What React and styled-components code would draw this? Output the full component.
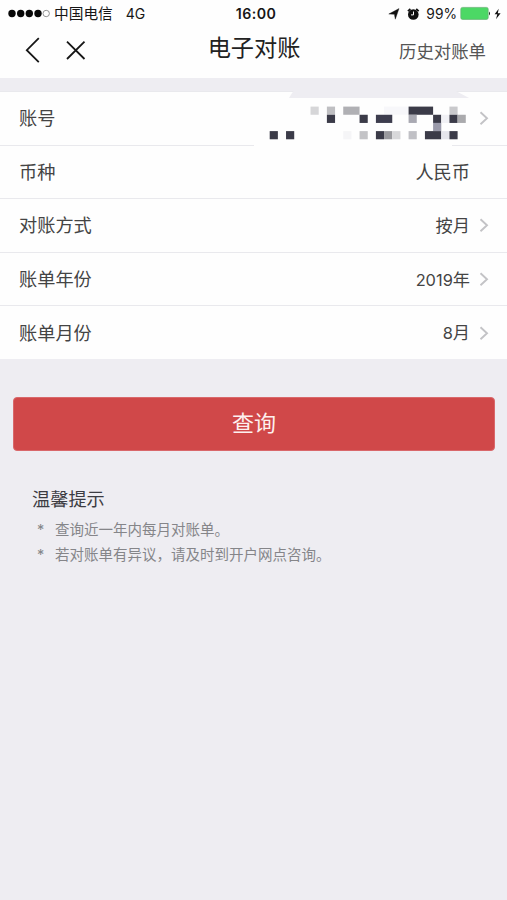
import React from "react";
import styled, { createGlobalStyle } from "styled-components";

const GlobalStyle = createGlobalStyle`
  * { box-sizing: border-box; }
  body {
    margin: 0;
    background: #eeedf2;
    font-family: "Liberation Sans", "Noto Sans CJK SC", sans-serif;
  }
`;

const Screen = styled.div`
  width: 507px;
  height: 900px;
  overflow: hidden;
  background: #eeedf2;
`;

const StatusBar = styled.div`
  display: grid;
  grid-template-columns: 1fr auto 1fr;
  align-items: center;
  height: 27px;
  padding: 0 5px 0 8px;
  background: #fefefe;
  color: #161616;
  font-size: 14.7px;
  line-height: 26px;
`;

const StatusGroup = styled.div`
  display: flex;
  align-items: center;
  justify-content: ${(p) => (p.$end ? "flex-end" : "flex-start")};
  height: 26px;
`;

const Carrier = styled.span`
  margin-left: 4px;
  white-space: nowrap;
`;

const Network = styled.span`
  margin-left: 13px;
  font-family: Inter, sans-serif;
  font-size: 14px;
`;

const Clock = styled.div`
  padding-left: 2px;
  font-family: Inter, "Liberation Sans", sans-serif;
  font-size: 14.2px;
  font-weight: 600;
  letter-spacing: 0.45px;
`;

const Percent = styled.span`
  margin: 0 3px 0 5px;
  font-family: Inter, sans-serif;
  font-size: 13.8px;
`;

const NavBar = styled.header`
  display: grid;
  grid-template-columns: 1fr auto 1fr;
  align-items: center;
  height: 51px;
  padding: 0 21px 0 24px;
  background: #fefefe;
`;

const NavIcons = styled.div`
  display: flex;
  align-items: center;
  gap: 25px;
  height: 46px;
  padding-bottom: 5px;
`;

const Title = styled.h1`
  margin: 0 2px 9px 0;
  color: #222;
  font-size: 23.2px;
  font-weight: 400;
  line-height: 34px;
`;

const HistoryLink = styled.div`
  justify-self: end;
  margin-bottom: 2px;
  color: #555;
  font-size: 17.4px;
  line-height: 26px;
`;

const List = styled.section`
  margin-top: 13px;
  background: #fefefe;
`;

const Row = styled.div`
  position: relative;
  display: flex;
  align-items: center;
  height: 53.6px;
  padding: 0 18px 0 19px;
  border-top: 1.5px solid #e9e9ed;
  color: #444;
  font-size: 18.2px;
  line-height: 28px;
`;

const Label = styled.span`
  flex: 1;
  padding-top: 2px;
`;

const Value = styled.span`
  margin-right: ${(p) => (p.$plain ? "19px" : "9px")};
  padding-top: 1px;
  font-family: Inter, "Noto Sans CJK SC", sans-serif;
  font-size: ${(p) => (p.$plain ? "18.2px" : "17.2px")};
`;

const Digits = styled.span`
  font-size: 16.4px;
`;

const Mosaic = styled.svg`
  position: absolute;
  left: 250px;
  top: -2px;
  z-index: 1;
`;

const QueryButton = styled.button`
  display: block;
  width: 482px;
  height: 54px;
  margin: 38px 0 0 13px;
  padding: 0;
  border: 1px solid #d9686b;
  border-radius: 4px;
  background: #d04849;
  color: #fdf0ef;
  font: inherit;
  font-size: 22px;
  line-height: 50px;
`;

const Tips = styled.section`
  padding: 35.5px 32px 0;
  color: #858589;
`;

const TipsTitle = styled.h2`
  margin: 0 0 3px;
  color: #3c3c42;
  font-size: 18.2px;
  font-weight: 400;
  line-height: 29px;
`;

const Tip = styled.div`
  display: flex;
  height: 24.5px;
  padding-left: 5px;
  font-size: 14.5px;
  line-height: 24px;
  white-space: nowrap;
`;

const Star = styled.span`
  width: 18px;
  font-family: Inter, sans-serif;
`;

const D = "#3b3b48";
const CELL = 8.17;
/* [column, row, span, colour] */
const cells = [
  [5, 0, 1, "#d6d6d8"], [7, 0, 1, "#bfbfc2"], [9, 0, 2, "#b0b0b4"],
  [14, 0, 3, "#f7f7fa"], [17, 0, 3, D], [22, 0, 1, "#c9c9cc"],
  [7, 1, 1, D], [11, 1, 1, D], [13, 1, 2, "#3d3d4e"], [17, 1, 1, "#a9a9b2"],
  [20, 1, 1, D], [21, 1, 1, "#f1f1f5"], [22, 1, 1, D], [23, 1, 1, "#aaaaad"],
  [20, 2, 1, "#9a9aaa"],
  [0, 3, 1, D], [2, 3, 1, D], [9, 3, 1, "#f5f5f7"], [11, 3, 1, "#c3c3c6"],
  [13, 3, 1, D], [14, 3, 1, "#99999d"], [15, 3, 1, "#d8d8da"],
  [17, 3, 1, "#c0c0c5"], [19, 3, 2, D], [21, 3, 1, "#e6e6ec"], [22, 3, 1, D],
];

function AccountMosaic() {
  return (
    <Mosaic width="220" height="60" viewBox="250 90 220 60">
      <path d="M254 139H452V149H254Z" fill="#fefefe" />
      <path d="M294 90H454L469 98H289Z" fill="#eeedf2" />
      {cells.map(([c, r, n, fill]) => (
        <rect
          key={`${c}-${r}`}
          x={269.7 + c * CELL}
          y={106.6 + r * CELL}
          width={n * CELL}
          height={CELL}
          fill={fill}
        />
      ))}
    </Mosaic>
  );
}

function Chevron() {
  return (
    <svg width="10" height="16" viewBox="0 0 10 16" fill="none" stroke="#c3c3c6" strokeWidth="1.9">
      <path d="M1.5 2.3L8 8.3L1.5 14.3" />
    </svg>
  );
}

function SignalDots() {
  return (
    <svg width="42" height="10" viewBox="0 0 42 10">
      {[4, 12.7, 21.3, 30].map((x) => (
        <circle key={x} cx={x} cy="4.5" r="3.7" fill="#080808" />
      ))}
      <circle cx="38.2" cy="4.5" r="3.2" fill="none" stroke="#777" strokeWidth="0.8" />
    </svg>
  );
}

function StatusIcons() {
  return (
    <svg width="33" height="16" viewBox="0 0 33 16">
      <path d="M0.8 8L11 2.6L7.3 13.2L6.4 8.3Z" fill="#111" stroke="#111" strokeWidth="0.4" />
      <circle cx="25.3" cy="8.5" r="5.3" fill="#111" />
      <path d="M19.9 5.2L22.4 3M28.2 3L30.7 5.2" stroke="#111" strokeWidth="1.7" />
      <path d="M25.5 5.5V8.9H23" fill="none" stroke="#fff" strokeWidth="1" />
    </svg>
  );
}

function Battery() {
  return (
    <svg width="42" height="16" viewBox="0 0 42 16">
      <rect x="0.8" y="1.4" width="27.4" height="12" rx="1.7" fill="#4cd865" stroke="#65ad72" strokeWidth="0.7" />
      <path d="M29 5.4Q31 7.3 29 9.4Z" fill="#222" />
      <path d="M38.7 2.8L34.6 8.3H37.3L36 13.2L40.6 7.2H37.8Z" fill="#111" />
    </svg>
  );
}

const rows = [
  { label: "账号", account: true },
  { label: "币种", value: "人民币", plain: true },
  { label: "对账方式", value: "按月" },
  { label: "账单年份", digits: "2019", value: "年" },
  { label: "账单月份", digits: "8", value: "月" },
];

export default function App() {
  return (
    <Screen>
      <GlobalStyle />
      <StatusBar>
        <StatusGroup>
          <SignalDots />
          <Carrier>中国电信</Carrier>
          <Network>4G</Network>
        </StatusGroup>
        <Clock>16:00</Clock>
        <StatusGroup $end>
          <StatusIcons />
          <Percent>99%</Percent>
          <Battery />
        </StatusGroup>
      </StatusBar>
      <NavBar>
        <NavIcons>
          <svg width="17" height="26" viewBox="0 0 17 26" fill="none" stroke="#161616" strokeWidth="1.8">
            <path d="M14.8 1.2L2.8 13.2L14.8 25.2" />
          </svg>
          <svg width="20" height="20" viewBox="0 0 20 20" fill="none" stroke="#161616" strokeWidth="1.8">
            <path d="M1 1.7L18.5 19M18.5 1.7L1 19" />
          </svg>
        </NavIcons>
        <Title>电子对账</Title>
        <HistoryLink>历史对账单</HistoryLink>
      </NavBar>
      <List>
        {rows.map((row) => (
          <Row key={row.label}>
            <Label>{row.label}</Label>
            {row.account && <AccountMosaic />}
            {row.value && (
              <Value $plain={row.plain}>
                {row.digits && <Digits>{row.digits}</Digits>}
                {row.value}
              </Value>
            )}
            {!row.plain && <Chevron />}
          </Row>
        ))}
      </List>
      <QueryButton>查询</QueryButton>
      <Tips>
        <TipsTitle>温馨提示</TipsTitle>
        <Tip><Star>*</Star>查询近一年内每月对账单。</Tip>
        <Tip><Star>*</Star>若对账单有异议，请及时到开户网点咨询。</Tip>
      </Tips>
    </Screen>
  );
}
